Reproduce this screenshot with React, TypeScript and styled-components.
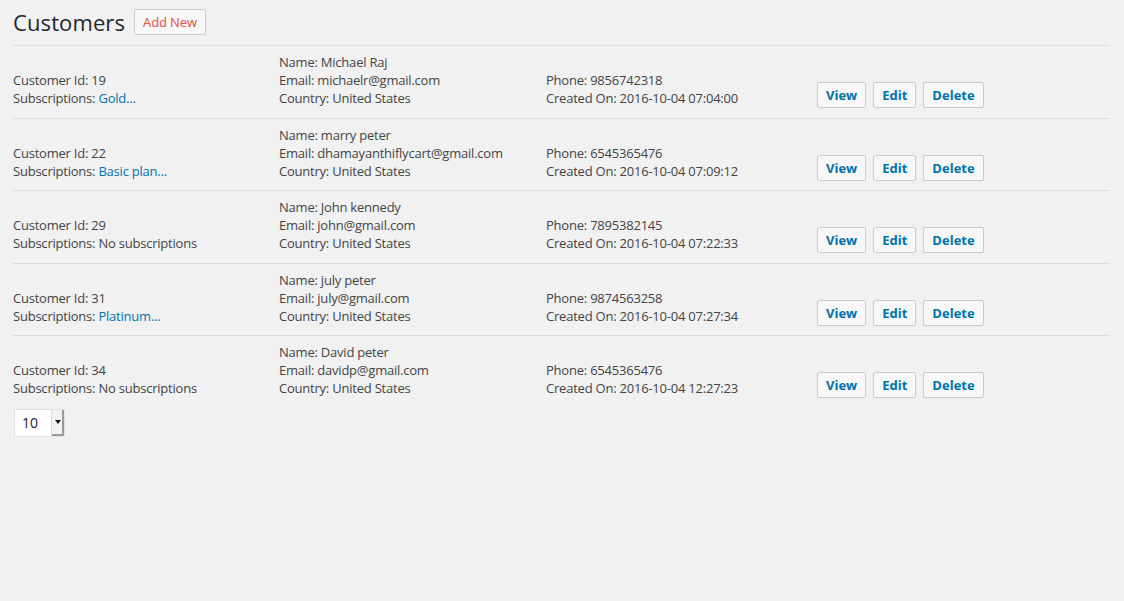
import React from "react";
import styled, { createGlobalStyle } from "styled-components";

const GlobalStyle = createGlobalStyle`
  html, body {
    margin: 0;
    padding: 0;
    background: #f1f1f1;
  }
  body {
    font-family: "Open Sans", "Noto Sans", sans-serif;
    font-size: 13px;
    color: #444;
  }
`;

const Page = styled.div`
  width: 1097px;
  padding: 0 0 0 13px;
`;

const Header = styled.div`
  display: flex;
  align-items: center;
  gap: 9px;
  height: 45px;
  border-bottom: 1px solid #dcdcdc;
`;

const Title = styled.h1`
  margin: -2px 0 0;
  font-size: 22px;
  font-weight: 400;
  letter-spacing: 0.1px;
  color: #23282d;
`;

const AddButton = styled.button`
  height: 26px;
  margin-top: -2px;
  padding: 0 8px;
  font-family: inherit;
  font-size: 13px;
  letter-spacing: -0.1px;
  color: #e14d43;
  background: #f7f7f7;
  border: 1px solid #ccc;
  border-radius: 2px;
`;

const Row = styled.div<{ last?: boolean }>`
  display: grid;
  grid-template-columns: 266px 267px 271px 1fr;
  align-items: end;
  padding: 7px 0 10.5px;
  letter-spacing: -0.22px;
  border-bottom: ${(props) => (props.last ? "none" : "1px solid #dcdcdc")};
`;

const Cell = styled.div`
  line-height: 18px;
  white-space: nowrap;
`;

const Link = styled.a`
  color: #0073aa;
  text-decoration: none;
`;

const Actions = styled.div`
  display: flex;
  gap: 7px;
  margin-bottom: -1px;
`;

const ActionButton = styled.button`
  height: 26px;
  padding: 0 8px;
  font-family: inherit;
  font-size: 13px;
  font-weight: 700;
  letter-spacing: 0;
  color: #0073aa;
  background: #f7f7f7;
  border: 1px solid #ccc;
  border-radius: 2px;
`;

const PageSize = styled.div`
  display: flex;
  align-items: center;
  width: 51px;
  height: 28px;
  margin: 1px 0 0 1px;
  background: #fff;
  box-sizing: border-box;
  border: 1px solid #e2e2e2;
`;

const PageSizeValue = styled.span`
  flex: 1;
  padding-left: 7px;
  font-size: 14px;
  color: #222;
`;

const Arrow = styled.span`
  width: 12px;
  height: 26px;
  display: flex;
  align-items: center;
  justify-content: center;
  background: #f3f3f3;
  border-left: 1px solid #ddd;
  box-shadow: inset -2px -2px 0 #9a9a9a;
  &::after {
    content: "";
    border-left: 3px solid transparent;
    border-right: 3px solid transparent;
    border-top: 4px solid #111;
    margin: -2px 1px 0 0;
  }
`;

type Customer = {
  id: number;
  name: string;
  email: string;
  phone: string;
  created: string;
  plan?: string;
};

const customers: Customer[] = [
  { id: 19, name: "Michael Raj", email: "michaelr@gmail.com", phone: "9856742318", created: "2016-10-04 07:04:00", plan: "Gold..." },
  { id: 22, name: "marry peter", email: "dhamayanthiflycart@gmail.com", phone: "6545365476", created: "2016-10-04 07:09:12", plan: "Basic plan..." },
  { id: 29, name: "John kennedy", email: "john@gmail.com", phone: "7895382145", created: "2016-10-04 07:22:33" },
  { id: 31, name: "july peter", email: "july@gmail.com", phone: "9874563258", created: "2016-10-04 07:27:34", plan: "Platinum..." },
  { id: 34, name: "David peter", email: "davidp@gmail.com", phone: "6545365476", created: "2016-10-04 12:27:23" },
];

export default function App() {
  return (
    <Page>
      <GlobalStyle />
      <Header>
        <Title>Customers</Title>
        <AddButton>Add New</AddButton>
      </Header>
      {customers.map((c, i) => (
        <Row key={c.id} last={i === customers.length - 1}>
          <Cell>
            <div>Customer Id: {c.id}</div>
            <div>
              Subscriptions: {c.plan ? <Link href="#">{c.plan}</Link> : "No subscriptions"}
            </div>
          </Cell>
          <Cell>
            <div>Name: {c.name}</div>
            <div>Email: {c.email}</div>
            <div>Country: United States</div>
          </Cell>
          <Cell>
            <div>Phone: {c.phone}</div>
            <div>Created On: {c.created}</div>
          </Cell>
          <Actions>
            <ActionButton>View</ActionButton>
            <ActionButton>Edit</ActionButton>
            <ActionButton>Delete</ActionButton>
          </Actions>
        </Row>
      ))}
      <PageSize>
        <PageSizeValue>10</PageSizeValue>
        <Arrow />
      </PageSize>
    </Page>
  );
}
